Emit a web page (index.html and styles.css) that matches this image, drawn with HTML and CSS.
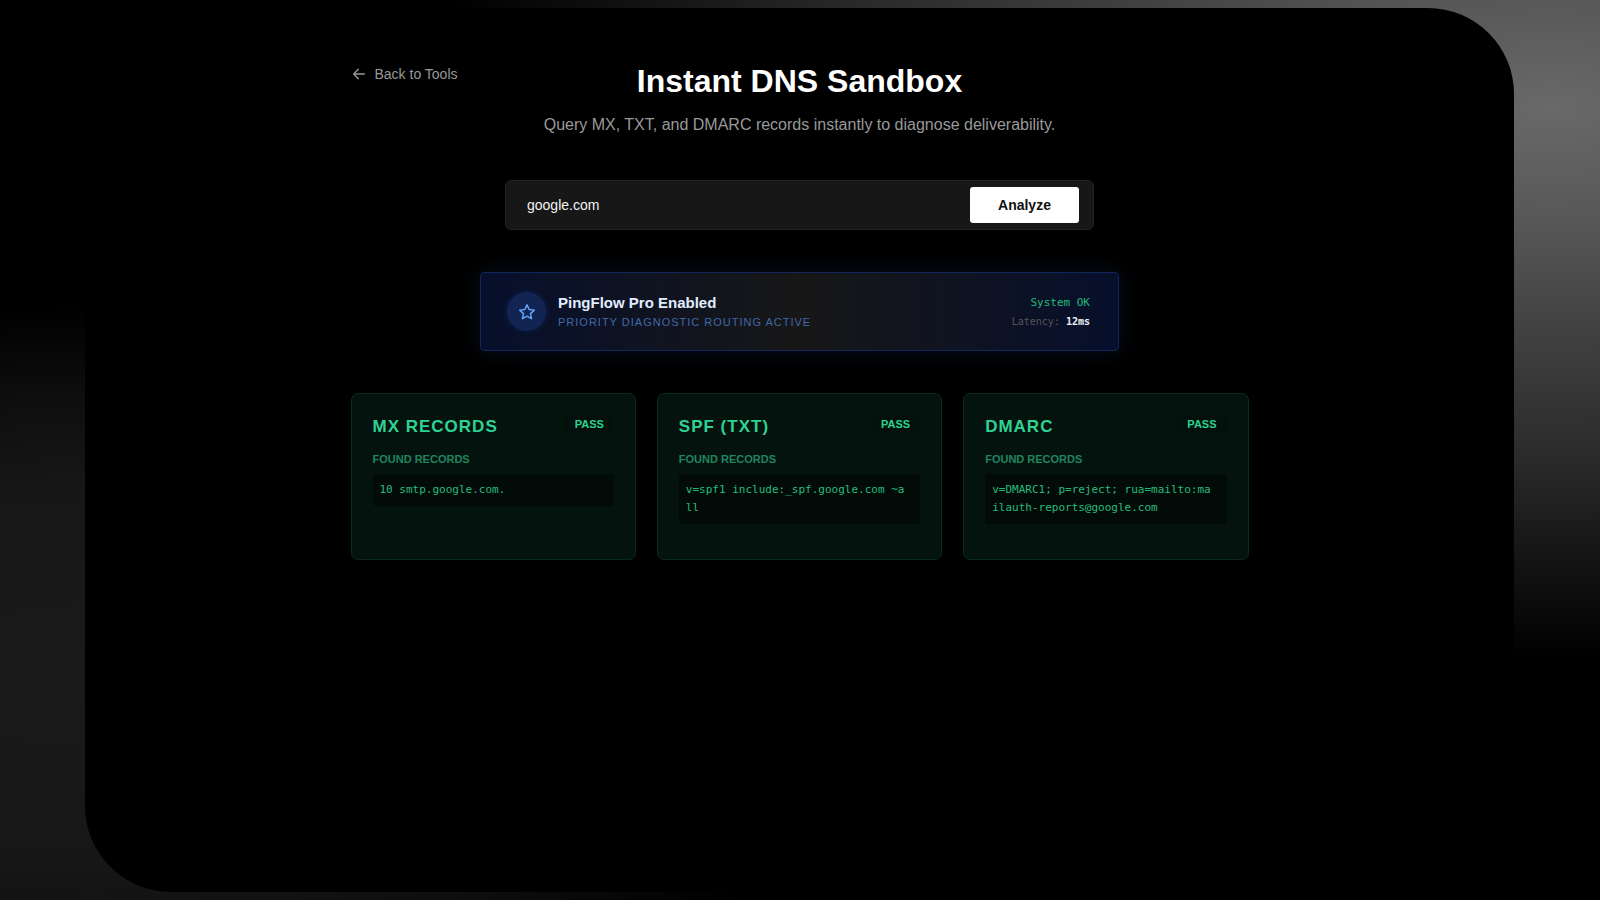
FILE: index.html
```html
<!DOCTYPE html>
<html lang="en">
<head>
    <meta charset="UTF-8">
    <meta name="viewport" content="width=device-width, initial-scale=1.0">
    <title>Instant DNS Sandbox</title>
    <link rel="stylesheet" href="styles.css">
</head>
<body>
    <div class="screen">
        <main class="content">
            <header class="header">
                <a class="back" href="#">
                    <svg width="16" height="16" viewBox="0 0 24 24" fill="none" stroke="currentColor" stroke-width="2" stroke-linecap="round" stroke-linejoin="round">
                        <path d="M20 12H4M11 5l-7 7 7 7"/>
                    </svg>
                    Back to Tools
                </a>
                <div class="titles">
                    <h1>Instant DNS Sandbox</h1>
                    <p>Query MX, TXT, and DMARC records instantly to diagnose deliverability.</p>
                </div>
            </header>

            <form class="search">
                <input type="text" name="domain" value="google.com" aria-label="Domain">
                <button type="button">Analyze</button>
            </form>

            <section class="banner">
                <div class="star">
                    <svg width="18" height="18" viewBox="0 0 24 24" fill="none" stroke="currentColor" stroke-width="2" stroke-linejoin="round">
                        <path d="M12 2.500l2.900 6.200 6.800.8-5 4.700 1.300 6.700-6-3.300-6 3.300 1.300-6.700-5-4.700 6.800-.8z"/>
                    </svg>
                </div>
                <div class="plan">
                    <h2>PingFlow Pro Enabled</h2>
                    <p>PRIORITY DIAGNOSTIC ROUTING ACTIVE</p>
                </div>
                <div class="status">
                    <p class="ok">System OK</p>
                    <p class="latency">Latency: <b>12ms</b></p>
                </div>
            </section>

            <section class="cards">
                <article class="card">
                    <div class="card-head">
                        <h3>MX RECORDS</h3>
                        <span class="badge">PASS</span>
                    </div>
                    <h4>FOUND RECORDS</h4>
                    <p class="record">10 smtp.google.com.</p>
                </article>
                <article class="card">
                    <div class="card-head">
                        <h3>SPF (TXT)</h3>
                        <span class="badge">PASS</span>
                    </div>
                    <h4>FOUND RECORDS</h4>
                    <p class="record">v=spf1 include:_spf.google.com ~all</p>
                </article>
                <article class="card">
                    <div class="card-head">
                        <h3>DMARC</h3>
                        <span class="badge">PASS</span>
                    </div>
                    <h4>FOUND RECORDS</h4>
                    <p class="record">v=DMARC1; p=reject; rua=mailto:mailauth-reports@google.com</p>
                </article>
            </section>
        </main>
    </div>
</body>
</html>
```
FILE: styles.css
```css
* {
    box-sizing: border-box;
}

h1, h2, h3, h4, p {
    margin: 0;
}

/* soft grey light behind the rounded screen */
body {
    margin: 0;
    min-height: 100vh;
    display: flex;
    padding: 8px 86px 8px 85px;
    font-family: "Liberation Sans", Arial, sans-serif;
    background:
        radial-gradient(ellipse 1120px 550px at 97% 12%, #696969 0%, #565656 22%, #404040 42%, #2a2a2a 64%, #121212 84%, transparent 100%),
        radial-gradient(ellipse 800px 370px at 6% 75%, #1a1a1a 0%, #171717 50%, #0e0e0e 75%, transparent 100%);
    background-color: #000;
}

.screen {
    flex: 1;
    background: #000;
    border-radius: 0 86px 0 86px;
    padding: 56px 24px;
}

.content {
    max-width: 898px;
    margin: 0 auto;
}

.header {
    display: grid;
    grid-template-columns: 1fr auto 1fr;
    align-items: start;
}

.back {
    display: flex;
    align-items: center;
    gap: 8px;
    line-height: 20px;
    font-size: 14px;
    color: #999;
    text-decoration: none;
}

.titles {
    text-align: center;
}

.titles h1 {
    font-size: 32px;
    line-height: 34px;
    color: #fff;
}

.titles p {
    margin-top: 15px;
    font-size: 16px;
    line-height: 24px;
    color: #999;
}

.search {
    display: flex;
    align-items: center;
    max-width: 589px;
    margin: 43px auto 0;
    padding: 6px 14px 6px 21px;
    background: #171717;
    border: 1px solid #222;
    border-radius: 6px;
}

.search input {
    flex: 1;
    min-width: 0;
    padding: 0;
    border: 0;
    outline: 0;
    background: none;
    color: #f2f2f2;
    font-family: inherit;
    font-size: 14px;
}

.search button {
    width: 109px;
    height: 36px;
    border: 0;
    border-radius: 3px;
    background: #fff;
    color: #111;
    font-family: inherit;
    font-size: 14px;
    font-weight: bold;
    cursor: pointer;
}

.banner {
    display: flex;
    align-items: center;
    gap: 12px;
    max-width: 639px;
    margin: 42px auto 0;
    padding: 19px 28px 19px 26px;
    background: linear-gradient(90deg, #070f2c, #171717 50%, #070f2c);
    border: 1px solid #12265c;
    border-radius: 4px;
    box-shadow: 0 0 20px rgba(59, 130, 246, 0.12);
}

.star {
    display: flex;
    align-items: center;
    justify-content: center;
    width: 39px;
    height: 39px;
    border-radius: 50%;
    background: #122451;
    color: #60a5fa;
    box-shadow: 0 0 6px rgba(37, 99, 235, 0.2);
}

.plan {
    flex: 1;
}

.plan h2 {
    font-size: 15px;
    line-height: 20px;
    color: #e1edff;
}

.plan p {
    font-size: 11px;
    line-height: 18px;
    letter-spacing: 1px;
    color: #4069a8;
}

.status {
    text-align: right;
    font-family: "DejaVu Sans Mono", monospace;
}

.ok {
    font-size: 11px;
    line-height: 20px;
    color: #20bd7c;
}

.latency {
    font-size: 10px;
    line-height: 18px;
    color: #555;
}

.latency b {
    color: #f2f2f2;
}

.cards {
    display: grid;
    grid-template-columns: repeat(3, 1fr);
    gap: 21px;
    margin-top: 42px;
}

.card {
    min-height: 167px;
    padding: 21px;
    background: #04130e;
    border: 1px solid #08291e;
    border-radius: 7px;
}

.card-head {
    display: flex;
    justify-content: space-between;
    align-items: flex-start;
}

.card h3 {
    padding-top: 1px;
    font-size: 17px;
    line-height: 22px;
    letter-spacing: 1px;
    color: #2ed292;
}

.badge {
    padding: 2px 10px;
    border-radius: 4px;
    background: #03100c;
    font-size: 11px;
    line-height: 14px;
    font-weight: bold;
    color: #2ed292;
}

.card h4 {
    margin-top: 13px;
    font-size: 11px;
    line-height: 16px;
    color: #20845f;
}

.record {
    margin-top: 7px;
    padding: 7px 12px 7px 7px;
    border-radius: 3px;
    background: #020b08;
    font-family: "DejaVu Sans Mono", monospace;
    font-size: 11px;
    line-height: 18px;
    word-break: break-all;
    color: #26bc7d;
}
```
